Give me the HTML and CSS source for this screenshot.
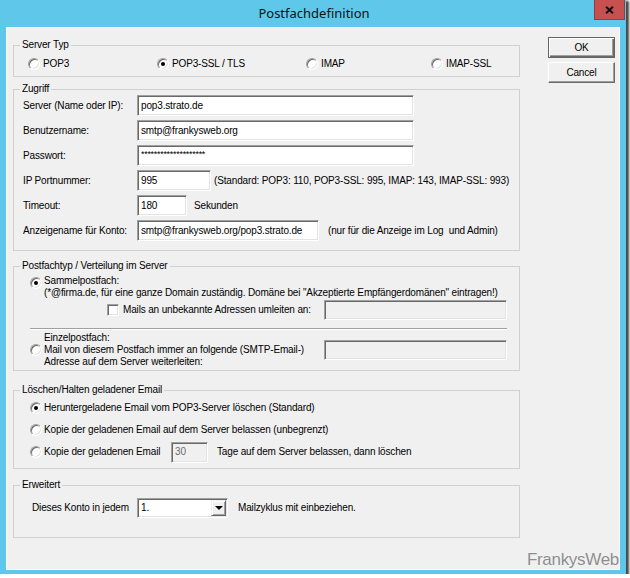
FILE: index.html
```html
<!DOCTYPE html>
<html lang="de">
<head>
<meta charset="utf-8">
<title>Postfachdefinition</title>
<link rel="stylesheet" href="styles.css">
</head>
<body>
<div class="window">
  <div class="titlebar">
    <div class="title">Postfachdefinition</div>
    <div class="close">
      <svg width="9" height="8" viewBox="0 0 9 8"><path d="M1 0.8 L8 7.2 M8 0.8 L1 7.2" stroke="#111" stroke-width="2"/></svg>
    </div>
  </div>
  <div class="client">
    <div class="main">
      <fieldset class="grp g-typ">
        <legend>Server Typ</legend>
        <div class="gbody">
          <div class="typ-row">
            <div class="opt"><span class="rb"></span><span>POP3</span></div>
            <div class="opt"><span class="rb on"></span><span>POP3-SSL / TLS</span></div>
            <div class="opt"><span class="rb"></span><span>IMAP</span></div>
            <div class="opt"><span class="rb"></span><span>IMAP-SSL</span></div>
          </div>
        </div>
      </fieldset>

      <fieldset class="grp g-zug">
        <legend>Zugriff</legend>
        <div class="gbody form">
          <span class="lbl">Server (Name oder IP):</span>
          <div class="fld"><span class="tb w-long">pop3.strato.de</span></div>
          <span class="lbl">Benutzername:</span>
          <div class="fld"><span class="tb w-long">smtp@frankysweb.org</span></div>
          <span class="lbl">Passwort:</span>
          <div class="fld"><span class="tb w-long pw">********************</span></div>
          <span class="lbl">IP Portnummer:</span>
          <div class="fld"><span class="tb w-port">995</span><span class="hint-port">(Standard: POP3: 110, POP3-SSL: 995, IMAP: 143, IMAP-SSL: 993)</span></div>
          <span class="lbl">Timeout:</span>
          <div class="fld"><span class="tb w-time">180</span><span class="hint-time">Sekunden</span></div>
          <span class="lbl">Anzeigename für Konto:</span>
          <div class="fld"><span class="tb w-disp">smtp@frankysweb.org/pop3.strato.de</span><span class="hint-disp">(nur für die Anzeige im Log&nbsp; und Admin)</span></div>
        </div>
      </fieldset>

      <fieldset class="grp g-pf">
        <legend>Postfachtyp / Verteilung im Server</legend>
        <div class="gbody">
          <div class="pf-a">
            <span class="rb on"></span>
            <div class="pf-text">Sammelpostfach:<br>(*@firma.de, für eine ganze Domain zuständig. Domäne bei "Akzeptierte Empfängerdomänen" eintragen!)</div>
          </div>
          <div class="pf-b">
            <span class="cb"></span>
            <span class="cb-lbl">Mails an unbekannte Adressen umleiten an:</span>
            <span class="tb dis w-fwd"></span>
          </div>
          <div class="sep"></div>
          <div class="pf-c">
            <span class="rb"></span>
            <div class="pf-text">Einzelpostfach:<br>Mail von diesem Postfach immer an folgende (SMTP-Email-)<br>Adresse auf dem Server weiterleiten:</div>
            <span class="tb dis w-fwd"></span>
          </div>
        </div>
      </fieldset>

      <fieldset class="grp g-del">
        <legend>Löschen/Halten geladener Email</legend>
        <div class="gbody">
          <div class="del-row r1"><span class="rb on"></span><span>Heruntergeladene Email vom POP3-Server löschen (Standard)</span></div>
          <div class="del-row r2"><span class="rb"></span><span>Kopie der geladenen Email auf dem Server belassen (unbegrenzt)</span></div>
          <div class="del-row r3"><span class="rb"></span><span class="del-lbl">Kopie der geladenen Email</span><span class="tb dis w-days">30</span><span class="days-txt">Tage auf dem Server belassen, dann löschen</span></div>
        </div>
      </fieldset>

      <fieldset class="grp g-erw">
        <legend>Erweitert</legend>
        <div class="gbody">
          <div class="erw-row">
            <span class="erw-lbl">Dieses Konto in jedem</span>
            <div class="combo"><span class="combo-val">1.</span><span class="combo-btn"><span class="tri"></span></span></div>
            <span class="erw-txt">Mailzyklus mit einbeziehen.</span>
          </div>
        </div>
      </fieldset>
    </div>

    <div class="buttons">
      <div class="btn def">OK</div>
      <div class="btn">Cancel</div>
    </div>

    <div class="watermark">FrankysWeb</div>
  </div>
</div>
</body>
</html>
```

FILE: styles.css
```css
html, body {
  margin: 0;
  padding: 0;
  background: #ffffff;
}

.window {
  width: 626px;
  height: 574px;
  box-sizing: border-box;
  background: #5fc8ea;
  display: flex;
  flex-direction: column;
  box-shadow: 2px 2px 2px 1px rgba(40, 40, 40, 0.85);
}

.titlebar {
  height: 27px;
  flex: none;
  display: grid;
  grid-template-columns: 1fr auto 1fr;
}

.title {
  grid-column: 2;
  font: 13px/27px "Noto Sans", "Open Sans", sans-serif;
  color: #111;
  padding-left: 2px;
}

.close {
  grid-column: 3;
  justify-self: end;
  align-self: start;
  margin-right: 1px;
  width: 31px;
  height: 20px;
  box-sizing: border-box;
  background: #c75050;
  border: 1px solid #9a3a3a;
  border-top: 0;
  display: flex;
  align-items: center;
  justify-content: center;
}

.client {
  flex: 1;
  margin: 0 6px 4px 6px;
  background: #f0f0f0;
  box-shadow: inset 0 0 0 1px #fbfbfb;
  position: relative;
  display: flex;
  align-items: flex-start;
  padding-left: 7px;
  font: 10px/12px "Liberation Sans", Arial, sans-serif;
  letter-spacing: -0.15px;
  color: #000;
}

.main {
  width: 507px;
  flex: none;
}

/* group boxes */
.grp {
  margin: 0;
  padding: 0;
  min-width: 0;
  border: 1px solid #d0d0d0;
}

.grp legend {
  margin-left: 6px;
  padding: 0 2px;
  line-height: 10px;
  font-size: 10px;
}

.g-typ { margin-top: 13px; }
.g-typ .gbody { padding: 7px 0 6px 14px; }
.g-zug { margin-top: 7px; }
.g-zug .gbody { padding: 1px 0 9px 9px; }
.g-pf  { margin-top: 10px; }
.g-pf .gbody { padding: 4px 12px 2px 16px; }
.g-del { margin-top: 14px; }
.g-del .gbody { padding: 1px 0 5px 16px; }
.g-erw { margin-top: 11px; }
.g-erw .gbody { padding: 8px 0 19px 18px; }

/* radios & checkbox */
.rb {
  width: 12px;
  height: 12px;
  flex: none;
  box-sizing: border-box;
  border-radius: 50%;
  background: #fff;
  border: 1px solid;
  border-color: #a0a0a0 #ffffff #ffffff #a0a0a0;
  box-shadow: inset 1px 1px 0 #696969, inset -1px -1px 0 #e3e3e3;
  position: relative;
}

.rb.on::after {
  content: "";
  position: absolute;
  left: 3px;
  top: 3px;
  width: 4px;
  height: 4px;
  border-radius: 50%;
  background: #000;
}

.cb {
  width: 12px;
  height: 12px;
  flex: none;
  box-sizing: border-box;
  background: #fff;
  border: 1px solid;
  border-color: #a0a0a0 #ffffff #ffffff #a0a0a0;
  box-shadow: inset 1px 1px 0 #696969, inset -1px -1px 0 #e3e3e3;
}

/* server type row */
.typ-row {
  display: grid;
  grid-template-columns: 129px 149px 125px auto;
  height: 13px;
  align-items: center;
}

.opt {
  display: flex;
  align-items: center;
  gap: 3px;
}

/* text boxes */
.tb {
  display: flex;
  align-items: center;
  height: 21px;
  box-sizing: border-box;
  background: #fff;
  border: 1px solid;
  border-color: #a0a0a0 #ffffff #ffffff #a0a0a0;
  box-shadow: inset 1px 1px 0 #696969, inset -1px -1px 0 #e3e3e3;
  padding: 0 3px;
  white-space: nowrap;
  overflow: hidden;
  flex: none;
}

.tb.dis {
  background: #f0f0f0;
  color: #6d6d6d;
}

.w-long { width: 277px; }
.w-port { width: 74px; }
.w-time { width: 50px; }
.w-disp { width: 182px; }
.w-fwd  { width: 183px; height: 20px; margin-left: auto; }
.w-days { width: 37px; }

.pw {
  align-items: flex-start;
  padding-top: 2px;
  font-size: 9px;
  letter-spacing: -0.3px;
}

/* Zugriff form */
.form {
  display: grid;
  grid-template-columns: 114px 1fr;
  grid-auto-rows: 21px;
  row-gap: 4px;
  align-items: center;
}

.fld {
  display: flex;
  align-items: center;
}

.hint-port { margin-left: 3px; }
.hint-time { margin-left: 7px; }
.hint-disp { margin-left: 9px; }

/* Postfachtyp */
.pf-a {
  display: flex;
  align-items: flex-start;
  gap: 2px;
}

.pf-a .rb { margin-top: 2px; }

.pf-text { white-space: nowrap; }

.pf-b {
  margin-top: 1px;
  height: 20px;
  display: flex;
  align-items: center;
}

.pf-b .cb { margin-left: 77px; }
.cb-lbl { margin-left: 4px; }

.sep {
  margin-top: 8px;
  height: 1px;
  background: #a0a0a0;
  border-bottom: 1px solid #ffffff;
}

.pf-c {
  margin-top: 2px;
  display: flex;
  align-items: center;
  gap: 2px;
}

/* Löschen */
.del-row {
  display: flex;
  align-items: center;
  gap: 2px;
  height: 22px;
  white-space: nowrap;
}

.del-row.r1 { height: 23px; }

.del-lbl { width: 125px; flex: none; }
.days-txt { margin-left: 7px; }

/* Erweitert */
.erw-row {
  display: flex;
  align-items: center;
  height: 20px;
}

.erw-lbl { width: 105px; flex: none; }

.combo {
  width: 91px;
  height: 20px;
  box-sizing: border-box;
  display: flex;
  background: #fff;
  border: 1px solid;
  border-color: #a0a0a0 #ffffff #ffffff #a0a0a0;
  box-shadow: inset 1px 1px 0 #696969, inset -1px -1px 0 #e3e3e3;
  padding: 1px;
}

.combo-val {
  flex: 1;
  padding-left: 2px;
  display: flex;
  align-items: center;
}

.combo-btn {
  width: 15px;
  box-sizing: border-box;
  background: #f0f0f0;
  border: 1px solid;
  border-color: #f0f0f0 #696969 #696969 #f0f0f0;
  box-shadow: inset 1px 1px 0 #ffffff, inset -1px -1px 0 #a0a0a0;
  display: flex;
  align-items: center;
  justify-content: center;
}

.tri {
  width: 0;
  height: 0;
  border-left: 4px solid transparent;
  border-right: 4px solid transparent;
  border-top: 4px solid #000;
}

.erw-txt { margin-left: 10px; }

/* buttons */
.buttons {
  margin-left: 28px;
  padding-top: 10px;
  display: flex;
  flex-direction: column;
  gap: 4px;
}

.btn {
  width: 67px;
  height: 21px;
  box-sizing: border-box;
  background: #f0f0f0;
  border: 1px solid;
  border-color: #ffffff #696969 #696969 #ffffff;
  box-shadow: inset -1px -1px 0 #a0a0a0;
  display: flex;
  align-items: center;
  justify-content: center;
}

.btn.def {
  border-color: #646464;
  box-shadow: inset 1px 1px 0 #ffffff, inset -1px -1px 0 #696969, inset -2px -2px 0 #a0a0a0;
}

/* watermark */
.watermark {
  position: absolute;
  right: 1px;
  bottom: 0;
  font: 17px/20px "Liberation Sans", Arial, sans-serif;
  letter-spacing: -0.3px;
  color: #8d8d8d;
  text-shadow: 0 0 1px #ffffff;
}
```
